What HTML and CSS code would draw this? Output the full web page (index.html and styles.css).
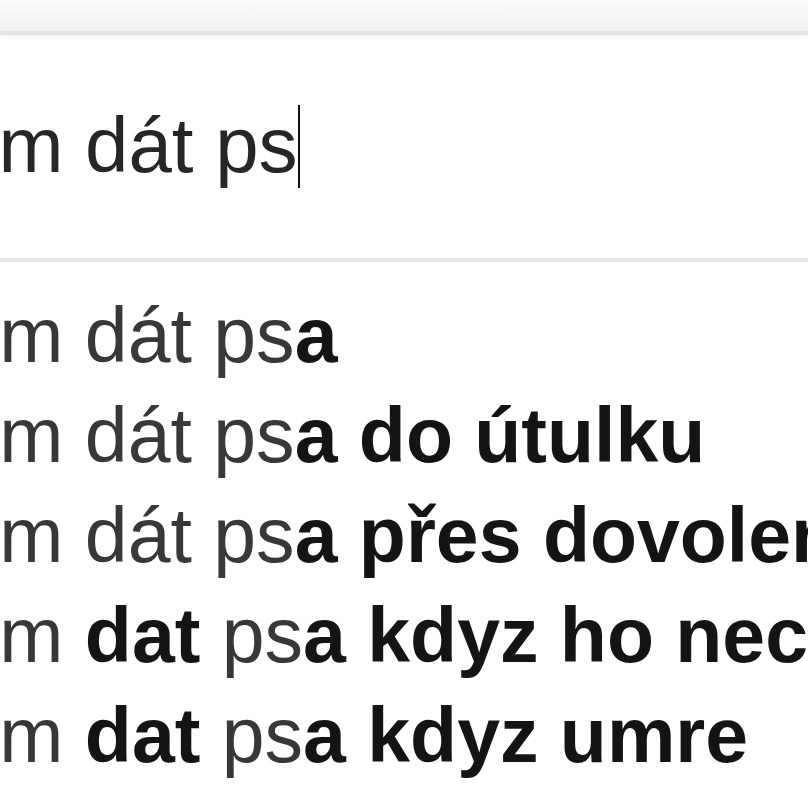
FILE: index.html
```html
<!DOCTYPE html>
<html lang="cs">
<head>
  <meta charset="UTF-8">
  <meta name="viewport" content="width=device-width, initial-scale=1.0">
  <title>kam dát ps</title>
  <link rel="stylesheet" href="styles.css">
</head>
<body>
  <div class="topbar"></div>
  <div class="searchbox">
    <div class="query">kam dát ps<span class="caret"></span></div>
  </div>
  <ul class="suggestions">
    <li>kam dát ps<b>a</b></li>
    <li>kam dát ps<b>a do útulku</b></li>
    <li>kam dát ps<b>a přes dovolenou</b></li>
    <li>kam <b>dat</b> ps<b>a kdyz ho nechci</b></li>
    <li>kam <b>dat</b> ps<b>a kdyz umre</b></li>
  </ul>
</body>
</html>
```

FILE: styles.css
```css
    /* Whole page, zoomed-in screenshot of a search box */
    body {
      margin: 0;
      background: #fff;
      font-family: "Liberation Sans", Arial, sans-serif;
      overflow: hidden;
    }
    .topbar {
      height: 31px;
      background: linear-gradient(#fbfbfb, #f0f0f0);
      border-bottom: 4px solid #e4e4e4;
      box-shadow: 0 2px 5px rgba(0, 0, 0, 0.06);
    }
    /* The input itself */
    .searchbox {
      height: 227px;
      padding-top: 60px;
      box-sizing: border-box;
      border-bottom: 4px solid #e6e6e6;
      overflow: hidden;
    }
    .query {
      margin-left: -84px; /* the "ka" is cut off by the crop */
      font-size: 78px;
      line-height: 100px;
      color: #262626;
      white-space: nowrap;
    }
    .caret {
      display: inline-block;
      width: 2px;
      height: 83px;
      background: #111;
      vertical-align: -16px;
    }
    /* Autocomplete rows */
    .suggestions {
      list-style: none;
      margin: 0;
      padding: 23px 0 0 0;
    }
    .suggestions li {
      margin-left: -82px;
      font-size: 77px;
      line-height: 100px;
      color: #383838;
      white-space: nowrap;
      overflow: hidden;
    }
    .suggestions b {
      color: #141414;
    }
```
